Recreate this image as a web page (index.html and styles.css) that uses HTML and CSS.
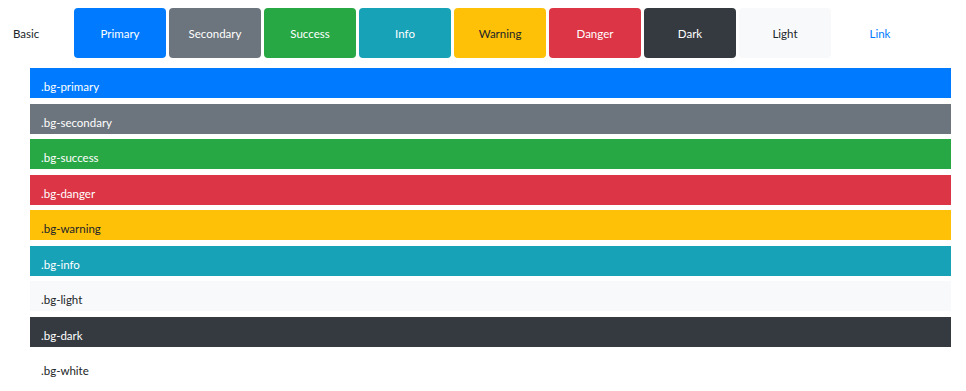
FILE: index.html
```html
<!DOCTYPE html>
<html>
<head>
<meta charset="utf-8">
<link rel="stylesheet" href="styles.css">
</head>
<body>
<div class="page">
  <div class="btn-row">
    <span class="label">Basic</span>
    <button class="btn btn-primary">Primary</button>
    <button class="btn btn-secondary">Secondary</button>
    <button class="btn btn-success">Success</button>
    <button class="btn btn-info">Info</button>
    <button class="btn btn-warning">Warning</button>
    <button class="btn btn-danger">Danger</button>
    <button class="btn btn-dark">Dark</button>
    <button class="btn btn-light">Light</button>
    <button class="btn btn-link">Link</button>
  </div>
  <div class="bars">
    <div class="bar bg-primary">.bg-primary</div>
    <div class="bar bg-secondary">.bg-secondary</div>
    <div class="bar bg-success">.bg-success</div>
    <div class="bar bg-danger">.bg-danger</div>
    <div class="bar bg-warning">.bg-warning</div>
    <div class="bar bg-info">.bg-info</div>
    <div class="bar bg-light">.bg-light</div>
    <div class="bar bg-dark">.bg-dark</div>
    <div class="bar bg-white">.bg-white</div>
  </div>
</div>
</body>
</html>
```
FILE: styles.css
```css
* { box-sizing: border-box; }
html, body { margin: 0; padding: 0; background: #fff; }
body {
  font-family: Lato, "Noto Sans", sans-serif;
  font-size: 11.5px;
  color: #212529;
}
.page { padding-top: 8px; }
.btn-row {
  display: flex;
  align-items: center;
  gap: 3px;
}
.label {
  width: 71px;
  padding-left: 13px;
  color: #212529;
}
.btn {
  width: 92px;
  height: 50px;
  border: none;
  border-radius: 4px;
  font-family: inherit;
  font-size: 11.5px;
  color: #fff;
  padding: 0;
}
.btn-primary { background: #007bff; }
.btn-secondary { background: #6c757d; }
.btn-success { background: #28a745; }
.btn-info { background: #17a2b8; }
.btn-warning { background: #ffc107; color: #212529; }
.btn-danger { background: #dc3545; }
.btn-dark { background: #343a40; }
.btn-light { background: #f8f9fa; color: #212529; }
.btn-link { background: transparent; color: #007bff; }

.bars {
  margin-top: 10px;
  padding: 0 15px 0 30px;
  display: flex;
  flex-direction: column;
  gap: 5.5px;
}
.bar {
  height: 30px;
  padding: 12px 10px 0 11px;
  line-height: 14px;
  color: #fff;
}
.bg-primary { background: #007bff; }
.bg-secondary { background: #6c757d; }
.bg-success { background: #28a745; }
.bg-danger { background: #dc3545; }
.bg-warning { background: #ffc107; color: #212529; }
.bg-info { background: #17a2b8; }
.bg-light { background: #f8f9fa; color: #212529; }
.bg-dark { background: #343a40; }
.bg-white { background: #fff; color: #212529; }
```
